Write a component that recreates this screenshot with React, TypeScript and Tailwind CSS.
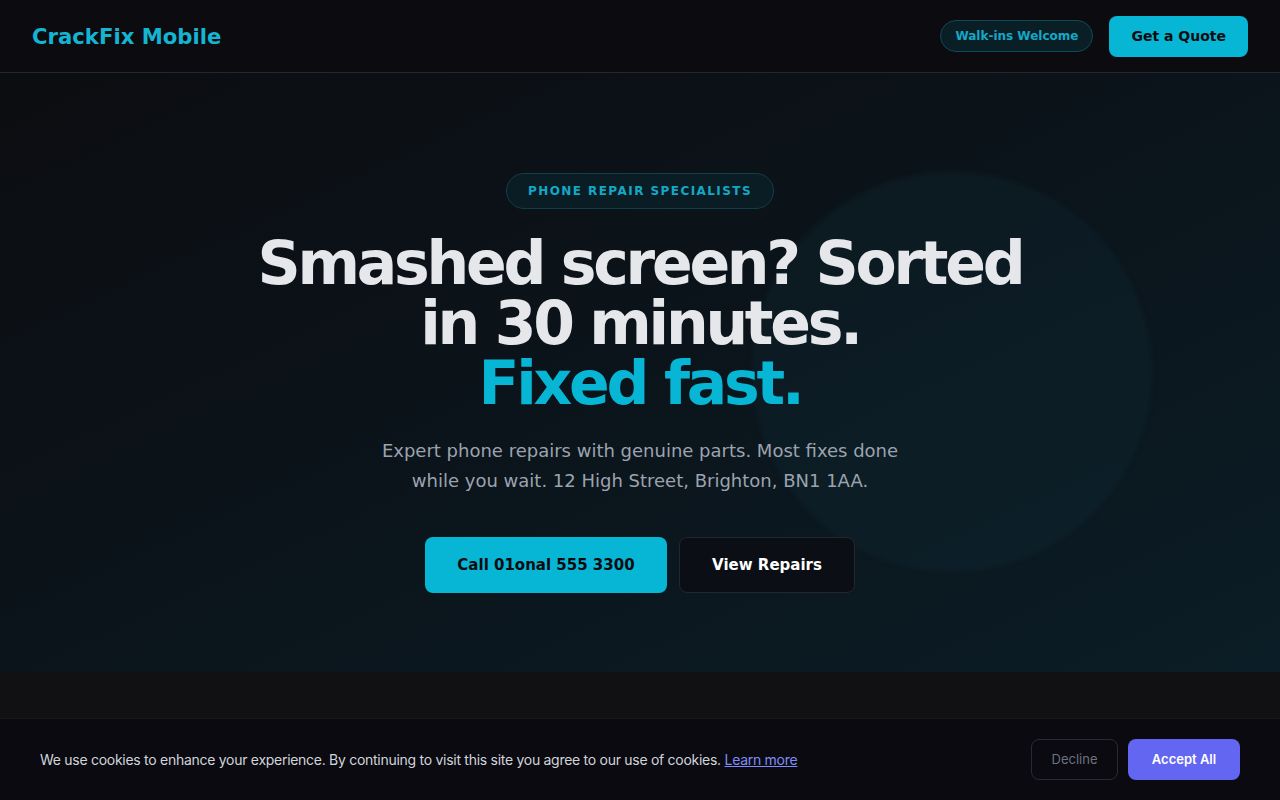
import React from "react";

export default function App() {
  return (
    <div className="min-h-screen bg-[#111113] font-['DejaVu_Sans',sans-serif] relative overflow-hidden">
      <header className="h-[73px] bg-[#0b0b10] border-b border-[#26262c] flex items-center justify-between px-8">
        <div className="text-[21.2px] leading-[28px] pt-[2px] font-bold text-[#14b4d2]">CrackFix Mobile</div>
        <div className="flex items-center gap-4">
          <span className="h-8 px-[14px] flex items-center rounded-full border border-[#0e4a57] bg-[#0a1e26] text-[12px] font-bold text-[#14a8c6]">
            Walk-ins Welcome
          </span>
          <button className="h-[41px] px-[22px] rounded-lg bg-[#06b6d4] text-[14px] font-bold text-[#0b0b10]">
            Get a Quote
          </button>
        </div>
      </header>

      <section className="relative h-[599px] bg-gradient-to-br from-[#0c0d11] via-[#0b141b] to-[#0b1d26] overflow-hidden">
        <div className="absolute left-[752px] top-[99px] w-[400px] h-[400px] rounded-full bg-[#0f2a35]/30 blur-[2px]" />
        <div className="relative flex flex-col items-center pt-[100px] text-center">
          <span className="h-[36px] px-[21px] flex items-center rounded-full border border-[#0f3f4b] bg-[#0a1d25] text-[12px] font-bold tracking-[0.12em] text-[#14a8c6]">
            PHONE REPAIR SPECIALISTS
          </span>
          <h1 className="mt-6 text-[60px] leading-[60px] font-bold tracking-[-0.054em] text-[#e5e7eb] max-w-[800px]">
            Smashed screen? Sorted in 30 minutes.
            <br />
            <span className="text-[#06b6d4]">Fixed fast.</span>
          </h1>
          <p className="mt-[23px] max-w-[530px] text-[18px] leading-[30px] text-[#9ca3af]">
            Expert phone repairs with genuine parts. Most fixes done while you wait. 12 High Street, Brighton, BN1 1AA.
          </p>
          <div className="mt-[41px] flex gap-3">
            <button className="h-[56px] w-[242px] rounded-lg bg-[#06b6d4] text-[15px] font-bold text-[#0b0b10]">
              Call 01onal 555 3300
            </button>
            <button className="h-[56px] w-[176px] rounded-lg border border-[#22262d] bg-[#0b0e14] text-[15px] font-bold text-white">
              View Repairs
            </button>
          </div>
        </div>
      </section>

      <div className="h-[46px] bg-[#111113]" />

      <div className="fixed left-0 right-0 bottom-0 h-[82px] bg-[#0a0a10] border-t border-[#16161c] flex items-center justify-between px-10 font-['Inter',sans-serif]">
        <p className="text-[14px] text-[#d1d5db] tracking-[-0.02em]">
          We use cookies to enhance your experience. By continuing to visit this site you agree to our use of cookies.{" "}
          <a className="text-[#818cf8] underline">Learn more</a>
        </p>
        <div className="flex gap-[10px]">
          <button className="h-[41px] w-[87px] rounded-lg border border-[#2a2a33] bg-transparent text-[13px] text-[#6b7280]">
            Decline
          </button>
          <button className="h-[41px] w-[112px] rounded-lg bg-[#6366f1] text-[13px] font-semibold text-white">
            Accept All
          </button>
        </div>
      </div>
    </div>
  );
}
